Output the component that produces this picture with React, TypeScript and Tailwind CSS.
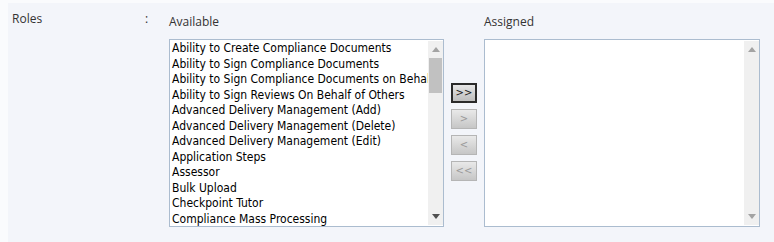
import React from "react";

const items = [
  "Ability to Create Compliance Documents",
  "Ability to Sign Compliance Documents",
  "Ability to Sign Compliance Documents on Behalf of Others",
  "Ability to Sign Reviews On Behalf of Others",
  "Advanced Delivery Management (Add)",
  "Advanced Delivery Management (Delete)",
  "Advanced Delivery Management (Edit)",
  "Application Steps",
  "Assessor",
  "Bulk Upload",
  "Checkpoint Tutor",
  "Compliance Mass Processing",
];

function Arrow({ up }: { up: boolean }) {
  return (
    <svg width="8" height="5" viewBox="0 0 8 5" className="block">
      {up ? (
        <polygon points="0,5 8,5 4,0" fill="#a3a3a3" />
      ) : (
        <polygon points="0,0 8,0 4,5" fill="#a3a3a3" />
      )}
    </svg>
  );
}

function ScrollBar({ thumb, dark }: { thumb: boolean; dark?: boolean }) {
  return (
    <div className="w-[15px] h-full bg-[#f0f0f0] flex flex-col items-center shrink-0">
      <div className="h-[17px] w-full flex items-center justify-center">
        <Arrow up />
      </div>
      <div className="flex-1 w-full px-[1px]">
        {thumb && <div className="h-[35px] w-full bg-[#c1c1c1]" />}
      </div>
      <div className="h-[17px] w-full flex items-center justify-center">
        <svg width="8" height="5" viewBox="0 0 8 5" className="block">
          <polygon points="0,0 8,0 4,5" fill={dark ? "#505050" : "#a3a3a3"} />
        </svg>
      </div>
    </div>
  );
}

function Btn({ label, active }: { label: string; active?: boolean }) {
  return (
    <div
      className={
        "w-[26px] h-[20px] flex items-center justify-center text-[10px] leading-none " +
        (active
          ? "border-2 border-[#2a2a2a] bg-gradient-to-b from-[#e6e6e6] to-[#bdbdbd] text-[#1a1a1a]"
          : "border border-[#b5b5b5] bg-gradient-to-b from-[#e9e9e9] to-[#c6c6c6] text-[#9a9a9a]")
      }
      style={{ fontFamily: "'DejaVu Sans', sans-serif" }}
    >
      {label}
    </div>
  );
}

export default function App() {
  return (
    <div className="w-[774px] h-[242px] bg-[#fafbfd] pt-[3px] pl-[8px] overflow-hidden">
      <div
        className="bg-[#f3f5fa] h-[239px] flex text-[12px] text-[#333]"
        style={{ fontFamily: "'Open Sans', sans-serif" }}
      >
        <div className="w-[137px] pl-[4px] pt-[8px] leading-[16px]">Roles</div>
        <div className="w-[24px] pt-[8px] leading-[16px]">:</div>
        <div className="flex flex-col pt-[10px]">
          <div className="leading-[16px] h-[26px] pt-[1px]">Available</div>
          <div className="flex">
            <div className="w-[275px] h-[188px] border border-[#abbccf] bg-white flex">
              <div
                className="flex-1 overflow-hidden pt-[1px] text-[12px] leading-[15.55px] text-[#000] whitespace-nowrap pl-[2px]"
                style={{ fontFamily: "'DejaVu Sans Condensed', 'DejaVu Sans', sans-serif" }}
              >
                {items.map((t) => (
                  <div key={t}>{t}</div>
                ))}
              </div>
              <div className="py-[1px] h-full">
                <ScrollBar thumb dark />
              </div>
            </div>
            <div className="w-[40px] flex flex-col items-center pt-[44px] gap-[6px]">
              <Btn label=">>" active />
              <Btn label=">" />
              <Btn label="<" />
              <Btn label="<<" />
            </div>
          </div>
        </div>
        <div className="flex flex-col pt-[10px]">
          <div className="leading-[16px] h-[26px] pt-[1px]">Assigned</div>
          <div className="w-[276px] h-[188px] border border-[#abbccf] bg-white flex justify-end">
            <div className="py-[1px] h-full">
              <ScrollBar thumb={false} />
            </div>
          </div>
        </div>
      </div>
    </div>
  );
}
